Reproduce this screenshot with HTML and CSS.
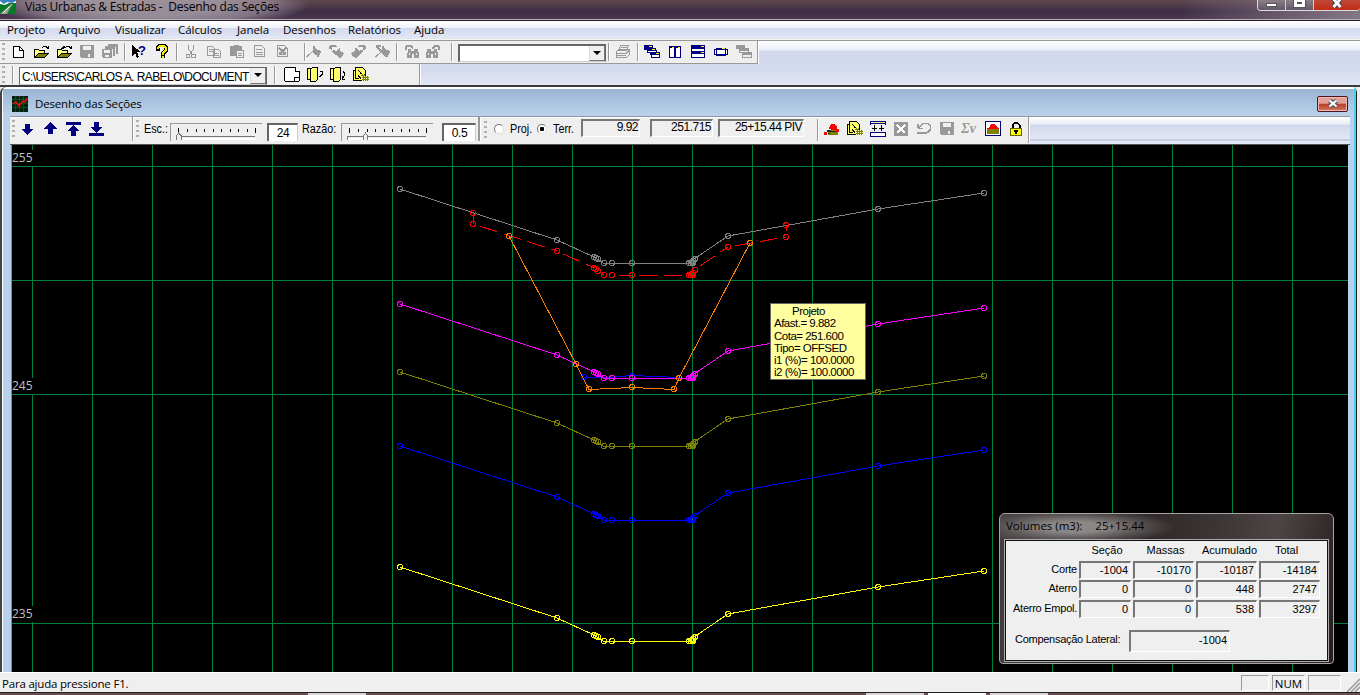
FILE: index.html
```html
<!DOCTYPE html>
<html lang="pt-BR">
<head>
<meta charset="utf-8">
<title>Vias Urbanas &amp; Estradas - Desenho das Seções</title>
<link rel="stylesheet" href="styles.css">
</head>
<body>
<div class="app">
  <header class="titlebar">
    <svg class="app-icon" width="16" height="14" viewBox="0 0 16 14"><path fill="#3b7fc4" d="M0 0h16v6H0z"/><path fill="#fff" d="M0 1l4 3 3-2 5 1 4-2v2l-5 3-6 1-5-2z"/><path fill="#0a7a28" d="M0 4l5 1 4-2 7 0v11H0z"/><path fill="#9aa09a" d="M0 14l8-7 3-3 2 0-3 4-3 6z"/><path stroke="#eee" d="M3 13l7-7"/></svg>
    <span class="titlebar-text">Vias Urbanas &amp; Estradas -&nbsp; Desenho das Seções</span>
    <div class="winbtns"><span class="wb wb-min"><i></i></span><span class="wb wb-max"><i></i></span><span class="wb wb-close"><svg width="12" height="8" viewBox="0 0 12 8"><path d="M2.500-1l7 8M9.500-1l-7 8" stroke="#445" stroke-width="5"/><path d="M2.500-1l7 8M9.500-1l-7 8" stroke="#fff" stroke-width="2.800"/></svg></span></div>
  </header>

  <nav class="menu">
    <span class="m1">Projeto</span><span class="m2">Arquivo</span><span class="m3">Visualizar</span><span class="m4">Cálculos</span><span class="m5">Janela</span><span class="m6">Desenhos</span><span class="m7">Relatórios</span><span class="m8">Ajuda</span>
  </nav>

  <div class="bars">
    <div class="bar bar-main">
      <i class="grip"></i>
      <svg class="ic first" viewBox="0 0 16 16"><path d="M3.500 2.500h6l4 4v7h-10z" fill="#fff" stroke="#000"/><path d="M9.500 2.500v4h4" fill="none" stroke="#000"/></svg>
      <svg class="ic" viewBox="0 0 16 16"><use href="#open"/></svg>
      <svg class="ic" viewBox="0 0 16 16"><use href="#open"/><path d="M4 5l3-3h2v2L6 5z"/></svg>
      <svg class="ic" viewBox="0 0 16 16"><use href="#disk"/></svg>
      <svg class="ic" viewBox="0 0 16 16"><path d="M6 0h9l1 1v9h-2V3H6zM3 2h9l1 1v9h-2V5H3z" fill="#999"/><path d="M0 5h10v9H1l-1-1z" fill="#999"/><path d="M2 6h6v3H2zM3 11h4v2H3z" fill="#efefef"/></svg>
      <i class="sep s1"></i>
      <svg class="ic" viewBox="0 0 16 16"><path d="M1 1v11l3-3 2 5 2-1-2-5h4z"/><text x="7" y="11" class="q-navy">?</text></svg>
      <svg class="ic" viewBox="0 0 16 16"><path d="M4 7V3l2-2h4l2 2v4l-3 2v2M8.500 11v3" fill="none" stroke="#000" stroke-width="4"/><path d="M4 5V4l2-2h4l2 2v2L8.500 9v2M8.500 12v2" fill="none" stroke="#f6ee00" stroke-width="2"/></svg>
      <i class="sep s2"></i>
      <svg class="ic" viewBox="0 0 16 16"><path d="M5.500 1v4l4 6M10.500 1v4l-4 6" fill="none" stroke="#999"/><circle cx="5" cy="12" r="2" fill="none" stroke="#999"/><circle cx="10.500" cy="12" r="2" fill="none" stroke="#999"/></svg>
      <svg class="ic" viewBox="0 0 16 16"><path d="M1.500 2.500h5l2 2v7h-7zM7.500 5.500h5l2 2v6h-7z" fill="#efefef" stroke="#999"/><path d="M3 5.500h4M3 7.500h4M9 9.500h4M9 11.500h4" stroke="#999"/></svg>
      <svg class="ic" viewBox="0 0 16 16"><path d="M1 2h3l1-1h4l1 1h3v10H1z" fill="#999"/><path d="M7.500 6.500h7v7h-7z" fill="#efefef" stroke="#999"/><path d="M9 9.500h4M9 11.500h4" stroke="#999"/></svg>
      <svg class="ic" viewBox="0 0 16 16"><use href="#sheet"/></svg>
      <svg class="ic" viewBox="0 0 16 16"><use href="#sheet"/><path d="M4 4l7 7M11 4l-7 7" stroke="#999" stroke-width="2"/></svg>
      <i class="sep s3"></i>
      <svg class="ic" viewBox="0 0 16 16"><use href="#spade"/></svg>
      <svg class="ic" viewBox="0 0 16 16"><use href="#spade-turn"/></svg>
      <svg class="ic" viewBox="0 0 16 16"><use href="#spade-turn" transform="matrix(-1 0 0 1 16 0)"/></svg>
      <svg class="ic" viewBox="0 0 16 16"><use href="#spade"/><path d="M2 2h5M3 3l10 10" stroke="#999" stroke-width="2"/></svg>
      <i class="sep s4"></i>
      <svg class="ic ic-21" viewBox="0 0 16 16"><use href="#binoc"/></svg>
      <svg class="ic ic-21" viewBox="0 0 16 16"><use href="#binoc" transform="matrix(-1 0 0 1 16 0)"/></svg>
      <i class="sep s5"></i>
      <div class="combo combo-find"><span></span><b></b></div>
      <i class="sep s6"></i>
      <svg class="ic" viewBox="0 0 16 16"><path d="M5.500 1.500h8l-2 5h-8z M1.500 7.500l2-2h11v5l-3 3h-10z" fill="#efefef" stroke="#999"/><path d="M2 9.500h9l3-3M2 11.500h9M6 3.500h6" stroke="#999" fill="none"/></svg>
      <i class="sep s7"></i>
      <svg class="ic" viewBox="0 0 16 16"><use href="#cascade"/></svg>
      <svg class="ic" viewBox="0 0 16 16"><path d="M2.500 2.500h5v11h-5zM8.500 2.500h5v11h-5z" fill="#fff" stroke="#000080"/><path d="M2 2h12v2H2z" fill="#000080"/><path d="M5 3h2M11 3h2" stroke="#ff0"/></svg>
      <svg class="ic" viewBox="0 0 16 16"><path d="M1.500 1.500h13v12h-13z" fill="#fff" stroke="#000080"/><path d="M1 1h14v4H1zM1 7h14v3H1z" fill="#000080"/><path d="M11 2.500h3M11 8.500h3" stroke="#ff0"/></svg>
      <svg class="ic" viewBox="0 0 16 16"><path d="M1.500 5.500h13v5h-13zM3.500 4.500h9v7h-9z" fill="#fff" stroke="#000080"/><path d="M3 4h10v2H3z" fill="#000080"/><path d="M9 4.500h3" stroke="#ff0"/></svg>
      <svg class="ic" viewBox="0 0 16 16"><use href="#cascade-off"/></svg>
    </div>
    <div class="bar bar-path">
      <i class="grip"></i><i class="sep p1"></i>
      <div class="combo combo-path"><span>C:\USERS\CARLOS A. RABELO\DOCUMENT</span><b></b></div>
      <i class="sep p2"></i>
      <svg class="ic" viewBox="0 0 16 16"><path d="M.5 1.500l1-1h10l4 4v9l-1 1H1.500l-1-1z" fill="#fff" stroke="#000"/><path d="M11.500.500v4h4M10.500 14v-4h5" fill="#fff" stroke="#000"/></svg>
      <svg class="ic" viewBox="0 0 16 16"><use href="#copybook"/><path d="M13 4.500h2.500V7L13 10" fill="none" stroke="#000" stroke-width="1.500"/></svg>
      <svg class="ic" viewBox="0 0 16 16"><use href="#copybook"/><path d="M13 4l2 3-2 4M12 9v3h3" fill="none" stroke="#000"/></svg>
      <svg class="ic" viewBox="0 0 16 16"><use href="#hatch"/></svg>
    </div>
  </div>

  <main class="child">
    <div class="child-title">
      <svg width="16" height="16" viewBox="0 0 16 16"><path d="M0 0h16v16H0z" fill="#021"/><path d="M3.500 0v16M7.500 0v16M11.500 0v16M0 3.500h16M0 7.500h16M0 11.500h16" stroke="#154a15"/><path d="M1 8l3-2 3 4 4-5 2 1 2-4" stroke="#e11" stroke-width="1.500" fill="none"/></svg>
      <span>Desenho das Seções</span>
      <b class="child-close"><svg width="12" height="9" viewBox="0 0 12 9"><path d="M2.500 1.500l7 6M9.500 1.500l-7 6" stroke="#556" stroke-width="4.500"/><path d="M2.500 1.500l7 6M9.500 1.500l-7 6" stroke="#fff" stroke-width="2.200"/></svg></b>
    </div>

    <div class="tools">
      <div class="tb tb-nav">
        <i class="grip"></i>
        <svg class="ic" viewBox="0 0 16 16"><path d="M6 3h5v5h4l-6.500 6L2 8h4z" fill="#000080"/></svg>
        <svg class="ic" viewBox="0 0 16 16"><path d="M6 13h5V8h4L8.500 1 2 8h4z" fill="#000080"/></svg>
        <svg class="ic" viewBox="0 0 16 16"><path d="M1 1h15v3H1zM6 15h5v-5h4L8.500 4 2 10h4z" fill="#000080"/></svg>
        <svg class="ic" viewBox="0 0 16 16"><path d="M1 12h15v3H1zM6 1h5v5h4l-6.500 6L2 6h4z" fill="#000080"/></svg>
      </div>
      <div class="tb tb-scale">
        <i class="grip"></i>
        <label class="l-esc">Esc.:</label>
        <svg class="slider" width="92" height="18" viewBox="0 0 92 18"><use href="#ticks"/><path d="M6.500 17v-4l2-3 3 3v4" fill="#efefef" stroke="#777"/></svg>
        <span class="num n1">24</span>
        <label class="l-raz">Razão:</label>
        <svg class="slider" width="92" height="18" viewBox="0 0 92 18"><use href="#ticks"/><path d="M22.500 17v-4l2-3 2 3v4" fill="#efefef" stroke="#777"/></svg>
        <span class="num n2">0.5</span>
      </div>
      <div class="tb tb-info">
        <i class="grip"></i>
        <i class="radio"></i><label class="l-proj">Proj.</label>
        <i class="radio on"></i><label class="l-terr">Terr.</label>
        <span class="field f1">9.92</span><span class="field f2">251.715</span><span class="field f3">25+15.44 PIV</span>
        <i class="sep t1"></i>
        <svg class="ic" viewBox="0 0 16 16"><path d="M4 14v-3l3-2h4l3 3v2z" fill="#808000"/><path d="M5 7l2-4h4l2 3v3H8L5 8z" fill="red"/><path d="M3 9h4v2H3zM7 10h5v1H7zM4 12h2v1H4z" fill="#222"/><path d="M0 11h3v3H0zM12 8h3v3h-3z" fill="red"/></svg>
        <svg class="ic" viewBox="0 0 16 16"><use href="#hatch"/></svg>
        <svg class="ic" viewBox="0 0 16 16"><path d="M.5 4V.500h15V4M1 2.500h14" fill="none" stroke="#000080"/><path d="M3 1.500h3M10 1.500h3" stroke="#ff0"/><path d="M4.500 4v6M11.500 4v6M2 7.500h5M9 7.500h5" stroke="#000"/><path d="M.5 11.500h15v4H.500z" fill="#fff" stroke="#000080"/></svg>
        <svg class="ic" viewBox="0 0 16 16"><path d="M1 1h14v14H1z" fill="#999"/><path d="M4 4l8 8M12 4l-8 8" stroke="#fff" stroke-width="2"/></svg>
        <svg class="ic" viewBox="0 0 16 16"><path d="M2 6.500V3M2 7.500h5M3 6.500l4-4h5l2.500 2v4l-3 3H2v1h9" fill="none" stroke="#999" stroke-width="1.500"/></svg>
        <svg class="ic" viewBox="0 0 16 16"><use href="#disk"/></svg>
        <svg class="ic ic-wide" viewBox="0 0 18 16"><text x="0" y="12" class="sigma">Σν</text></svg>
        <svg class="ic" viewBox="0 0 16 16"><path d="M.5.500h15v14H.500z" fill="#fff" stroke="#000080"/><path d="M2 8h12v5H2z" fill="#808000"/><path d="M2 8V7l3-1V4l2-1h3l1 2 3 2v1z" fill="red"/></svg>
        <svg class="ic" viewBox="0 0 16 16"><path d="M4.500 8V4l2-2h3l2 2v4" fill="none" stroke="#000" stroke-width="2"/><path d="M2.500 7.500h11v7h-11z" fill="#ff0" stroke="#660"/><path d="M6 9.500h4M8 9v4" stroke="#000" stroke-width="2"/></svg>
      </div>
      <div class="tb-rest"></div>
    </div>

    <div class="canvas">
      <svg class="plot" width="1336" height="527" viewBox="12 145 1336 527">
        <defs>
          <g id="open"><path d="M1.500 13.500v-8h4l1 1h5v3h-6z" fill="#ffff80" stroke="#000"/><path d="M1.500 13.500l4-4h10l-4 4z" fill="#808000" stroke="#000"/><path d="M9 3.500l2-1h2l2 2M15.500 2v3" fill="none" stroke="#000"/></g>
          <path id="disk" fill-rule="evenodd" d="M1 1h14v13H2l-1-1zM4 2v4h8V2zM9 10v3h2v-3z" fill="#999"/>
          <g id="sheet"><path d="M2.500 1.500h7l3 3v8h-10z" fill="#efefef" stroke="#999"/><path d="M4 5.500h6M4 8.500h7M4 10.500h7" stroke="#999"/></g>
          <path id="spade" d="M0 13h2l5-5 3 3h2v2h2l1-4 1-1-2-2h-2l-2-2V2H8v5z" fill="#999"/>
          <g id="spade-turn" fill="#999"><path d="M1 5V2l2-1h4l2 1v1H4v3zM3 7l3-1 3 2 4 2 3-1-2 4-3 1-3-3z"/><path d="M6 9l5-5h1v3l4 2-3 3z"/></g>
          <g id="binoc" fill="#999"><path d="M1 2l2-1h4l2 2v2H8L6 3H3v3H1zM4 5h3v2h3V5h4v2l1 2v5h-5v-4H8v4H3V9l1-1z"/><path d="M5 9h1v2H5zM12 9h1v2h-1z" fill="#efefef"/></g>
          <g id="cascade"><path d="M0 1h9v5H0z" fill="#000080"/><path d="M3.500 6.500h9v2h-9zM7.500 10.500h8v3h-8z" fill="#fff" stroke="#000080"/><path d="M3 4h9v3H3zM6 8h10v3H6z" fill="#000080"/><path d="M5 2.500h3M8 5.500h3M12 9.500h3" stroke="#ff0"/></g>
          <g id="cascade-off"><path d="M0 1h9v4H0z" fill="#999"/><path d="M3.500 6.500h9v2h-9zM6.500 10.500h9v3h-9z" fill="#efefef" stroke="#999"/><path d="M3 4h10v2H3zM6 8h10v3H6z" fill="#999"/></g>
          <g id="copybook"><path d="M.5 1.500h8v11h-8z" fill="#ffff70" stroke="#000"/><path d="M3.500 2.500l2-2h5v12l-2 2h-5z" fill="#ffff70" stroke="#000"/></g>
          <g id="hatch"><path d="M.5 3.500h2v-3h7l3 3v10H.500z" fill="#ff6" stroke="#000"/><path d="M2.500 3v8h3M5 3l7 8M5 8l3 4" stroke="#000" fill="none"/><path d="M9 9h7v5H9zM8 7h4v2H8z" fill="#808000"/><path d="M9 9.500h7M9 11.500h7M9 13.500h7M8 7.500h4" stroke="#efefaf" stroke-dasharray="1 1"/></g>
          <g id="ticks"><path d="M.5 18V.500H92" fill="none" stroke="#999"/><path d="M8.500 5v5M17.500 6v3M26 6v3M34.500 6v3M43 6v3M51.500 6v3M60 6v3M68.500 6v3M77 6v3M85.500 5v5" stroke="#000"/><path d="M6 17v-3.500h79" fill="none" stroke="#777"/><path d="M7 16h79" stroke="#fff" stroke-width="2"/></g>
          <circle id="node" r="2.500" fill="none" stroke="currentColor"/>
          <g id="terrain" fill="none" stroke="currentColor">
            <path d="M400 0L557 51 594 68 604 74.500H689L694 70 728 47 878 20 984 4"/>
            <use href="#node" x="400"/><use href="#node" x="557" y="51"/><use href="#node" x="594" y="68"/><use href="#node" x="596" y="69"/><use href="#node" x="598" y="70"/><use href="#node" x="604" y="74"/><use href="#node" x="612" y="74"/><use href="#node" x="632" y="74"/><use href="#node" x="689" y="74"/><use href="#node" x="691" y="74"/><use href="#node" x="692" y="73"/><use href="#node" x="693" y="74"/><use href="#node" x="693" y="72"/><use href="#node" x="695" y="70"/><use href="#node" x="728" y="47"/><use href="#node" x="878" y="20"/><use href="#node" x="984" y="4"/>
          </g>
        </defs>
        <path class="grid" d="M32 145h1v527h-1zM92 145h1v527h-1zM152 145h1v527h-1zM212 145h1v527h-1zM272 145h1v527h-1zM332 145h1v527h-1zM392 145h1v527h-1zM452 145h1v527h-1zM512 145h1v527h-1zM572 145h1v527h-1zM632 145h1v527h-1zM692 145h1v527h-1zM752 145h1v527h-1zM812 145h1v527h-1zM872 145h1v527h-1zM932 145h1v527h-1zM992 145h1v527h-1zM1052 145h1v527h-1zM1112 145h1v527h-1zM1172 145h1v527h-1zM1232 145h1v527h-1zM1292 145h1v527h-1z"/>
        <path class="grid" d="M12 166h1336v1H12zM12 280h1336v1H12zM12 394h1336v1H12zM12 623h1336v1H12z"/>
        <path d="M12 150h21v16H12zM12 378h21v16H12zM12 606h21v16H12z"/>
        <g class="axis"><text x="12" y="162">255</text><text x="12" y="390">245</text><text x="12" y="618">235</text></g>
        <use href="#terrain" y="189" color="#808080"/>
        <g color="#f00" fill="none" stroke="#f00">
          <path d="M473.500 213v11M786.500 225v6"/>
          <path stroke-dasharray="18 7" stroke-dashoffset="18" d="M473 224L557 251M557 251L594 268M594 268L604 275.500M612 275.500H632M632 275.500H689M694 270L728 247M728 247L786 237"/>
          <use href="#node" x="473" y="213"/><use href="#node" x="473" y="224"/><use href="#node" x="557" y="251"/><use href="#node" x="594" y="268"/><use href="#node" x="596" y="269"/><use href="#node" x="598" y="271"/><use href="#node" x="604" y="275"/><use href="#node" x="612" y="275"/><use href="#node" x="632" y="275"/><use href="#node" x="689" y="275"/><use href="#node" x="691" y="275"/><use href="#node" x="692" y="274"/><use href="#node" x="693" y="275"/><use href="#node" x="693" y="273"/><use href="#node" x="695" y="270"/><use href="#node" x="728" y="247"/><use href="#node" x="786" y="225"/><use href="#node" x="786" y="237"/>
        </g>
        <g color="#00f" fill="none" stroke="#00f"><path d="M584 377.500h24L632 375.500 656 376.500 679 377.500"/><use href="#node" x="584" y="377"/><use href="#node" x="632" y="376"/></g>
        <use href="#terrain" y="304" color="#f0f"/>
        <g color="#ff8000" fill="none" stroke="#ff8000">
          <path d="M509 236L576 364 589 389.500 632 387.500 674 389.500 679 378 750 243"/>
          <use href="#node" x="509" y="236"/><use href="#node" x="576" y="364"/><use href="#node" x="589" y="389"/><use href="#node" x="632" y="387"/><use href="#node" x="674" y="389"/><use href="#node" x="679" y="378"/><use href="#node" x="750" y="243"/>
        </g>
        <use href="#terrain" y="372" color="#808000"/>
        <use href="#terrain" y="446" color="#00f"/>
        <use href="#terrain" y="567" color="#ff0"/>
      </svg>

      <div class="tip"><span class="tip-head">Projeto</span><span>Afast.= 9.882</span><span>Cota= 251.600</span><span>Tipo= OFFSED</span><span>i1 (%)= 100.0000</span><span>i2 (%)= 100.0000</span></div>

      <section class="volumes">
        <h2><span>Volumes (m3):</span><span>25+15.44</span></h2>
        <div class="volumes-body">
          <div class="vgrid">
            <i></i><em class="sec">Seção</em><em class="mas">Massas</em><em class="acc">Acumulado</em><em class="tot">Total</em>
            <label>Corte</label><b>-1004</b><b>-10170</b><b>-10187</b><b>-14184</b>
            <label>Aterro</label><b>0</b><b>0</b><b>448</b><b>2747</b>
            <label>Aterro Empol.</label><b>0</b><b>0</b><b>538</b><b>3297</b>
          </div>
          <div class="lateral"><label>Compensação Lateral:</label><b>-1004</b></div>
        </div>
      </section>
    </div>
  </main>

  <footer class="status">
    <span class="status-text">Para ajuda pressione F1.</span>
    <i class="pane pa"></i><i class="pane pb">NUM</i><i class="pane pc"></i>
    <svg width="14" height="14" viewBox="0 0 14 14"><path d="M1 14L14 1M5 14l9-9M9 14l5-5" stroke="#999" stroke-width="1.500"/></svg>
  </footer>
  <div class="desk"><i class="d1"></i><i class="d2"></i><i class="d3"></i><i class="d4"></i></div>
</div>
</body>
</html>
```
FILE: styles.css
```css
* { box-sizing: border-box; }
body { margin: 0; overflow: hidden; background: #efefef; font: 11px/13px "Liberation Sans", Arial, sans-serif; color: #000; }
.app { width: 1360px; height: 695px; display: flex; flex-direction: column; overflow: hidden; }
i, em { font-style: normal; }
b { font-weight: normal; }
svg { display: block; flex: none; }
span, label { white-space: nowrap; }

/* Main window frame */
.titlebar { height: 21px; flex: none; display: flex; align-items: flex-start; border-bottom: 1px solid #241c24; box-shadow: inset 0 -1px #b8b0b8;
  background: radial-gradient(ellipse 160px 24px at 150px 5px, #aaa1aad0 45%, #9d909cb0 75%, transparent), linear-gradient(90deg, transparent 1180px, #857886), linear-gradient(#60484f, #3e2e45 55%, #4a3850); }
.app-icon { height: 14px; }
.titlebar-text { margin: 0 0 0 9px; font: 12px/14px "Open Sans", sans-serif; letter-spacing: -.22px; }
.winbtns { margin-left: auto; margin-right: 0; display: flex; height: 11px; border: 1px solid #ddd; border-top: 0; border-right: 0; border-radius: 0 0 4px 4px; overflow: hidden; }
.wb { display: flex; justify-content: center; border-right: 1px solid #ccc; width: 28px; background: linear-gradient(#8b8088, #62566a); }
.wb-close { width: 46px; border: 0; background: linear-gradient(#bf4938, #c22c14); }
.wb-min i { width: 11px; height: 4px; margin-top: 3px; background: #fff; border: 1px solid #555; }
.wb-max i { width: 11px; height: 7px; border: 3px solid #fff; border-top-width: 2px; background: #555; outline: 1px solid #555; }

.menu { height: 20px; flex: none; display: flex; background: linear-gradient(#fff 0, #eef1f9 35%, #d3d9ec 36%, #e1e6f5 88%, #aeb3c4 89%, #f4f4f4 93%); border-bottom: 1px solid #9a9a9a; font: 11.5px/18px "Open Sans", sans-serif; }
.menu span { flex: none; letter-spacing: -.05px; }
.m1 { width: 52px; margin-left: 7px; }
.m2 { width: 56px; }
.m3 { width: 63px; }
.m4 { width: 59px; }
.m5 { width: 46px; }
.m6 { width: 65px; }
.m7 { width: 66px; }
.menu .m1, .menu .m7 { letter-spacing: -.1px; }

/* Tool bars */
.bars { height: 46px; flex: none; background: linear-gradient(#fff, #e9edf8 9px, #d2d8ec 10px, #d5dbee 30px, #e2e7f6); border-bottom: 2px solid #3b3b3f; }
.bar { display: flex; align-items: center; background: #efefef; border-right: 1px solid #999; border-bottom: 1px solid #999; box-shadow: 1px 0 #fff; }
.bar-main { width: 758px; height: 23px; }
.bar-path { width: 420px; height: 21px; border-bottom: 0; }
.ic { width: 16px; height: 16px; margin: 0 3px 0 4px; shape-rendering: crispEdges; }
.bar-main .ic:not(.ic-21) { margin: 0 4px 0 3px; }
.ic.ic-21 { margin: 0 2px 0 3px; }
.ic.ic-wide { width: 18px; margin: 0 2px 0 3px; }
.grip { flex: none; width: 3px; height: 18px; margin: 0 0 0 2px; background: repeating-linear-gradient(#b0b0b0 0 2px, transparent 2px 5px); }
.bar-main .grip { margin-right: 2px; }
.sep { flex: none; width: 1px; height: 18px; background: #999; box-shadow: 1px 0 #fff; }
.s1 { margin: 0 3px 0 2px; }
.s2 { margin: 0 3px 0 2px; }
.s3 { margin: 0 -3px 0 9px; }
.s4 { margin: 0 4px 0 2px; }
.s5 { margin: 0 6px 0 8px; }
.s6 { margin: 0 3px 0 2px; }
.s7 { margin: 0 3px 0 2px; }
.q-navy { font: bold 13px "Liberation Sans", sans-serif; fill: #000080; }
.sigma { font: italic bold 14px "Liberation Serif", serif; fill: #999; }
.combo { flex: none; display: flex; background: #fff; border: 1px solid #666; border-bottom-color: #ccc; overflow: hidden; }
.combo span { flex: 1; }
.combo b { flex: none; width: 16px; display: flex; align-items: center; justify-content: center; background: #efefef; border-left: 1px solid #ddd; border-right: 1px solid #777; border-bottom: 1px solid #777; }
.combo b::before { content: ""; border: 4px solid transparent; border-top-color: #000; border-bottom: 0; }
.combo-find { width: 148px; height: 18px; margin-top: 2px; border-top-width: 2px; border-left-width: 2px; }
.combo-path { width: 248px; height: 18px; padding-left: 2px; margin-top: 2px; font-size: 12px; line-height: 18px; }
.combo-path span { letter-spacing: -.63px; }
.p1 { margin: 0 6px 0 7px; }
.p2 { margin: 0 5px 0 7px; }

/* Section drawing window */
.child { flex: 1; min-height: 0; display: flex; flex-direction: column; padding: 0 9px 0 10px; border-left: 2px solid #444; border-right: 2px solid #eee; margin: 0 1px 0 0;
  background: linear-gradient(#222, #222) right / 1px 100% no-repeat, linear-gradient(#45d2f4, #45d2f4) right 1px top / 2px 100% no-repeat, linear-gradient(#fff, #fff) left / 1px 100% no-repeat, linear-gradient(#fff, #fff) top / 100% 2px no-repeat, linear-gradient(#98b4d2, #b9d1ea 28px, #b9d1ea); border-radius: 6px 6px 0 0; }
.child-title { height: 29px; flex: none; display: flex; align-items: center; padding: 4px 0 0; }
.child-title span { margin-left: 7px; font: 11.5px/16px "Open Sans", sans-serif; letter-spacing: -.18px; }
.child-close { margin-left: auto; margin-right: 0; width: 31px; height: 16px; display: flex; align-items: center; justify-content: center; border: 1px solid #4a1420; border-radius: 2px; box-shadow: inset 0 0 0 1px #f0b8b0; background: linear-gradient(#e2a197 45%, #bc3b27 50%, #d07a62); }
.tools { height: 29px; flex: none; display: flex; margin: 0 -2px 0 -2px; background: #efefef; border-top: 1px solid #8d98a6; border-bottom: 1px solid #555; }
.tb { display: flex; align-items: center; flex: none; border-right: 1px solid #999; box-shadow: 1px 0 #fff, inset 0 1px #fff; height: 24px; }
.tb label { flex: none; font-size: 12px; line-height: 15px; transform: scaleX(.9); transform-origin: left; }
.tb-nav { width: 123px; }
.tb-nav .grip { margin-right: 1px; }
.tb-nav .ic { margin: 0 4px 0 3px; }
.tb-scale { width: 347px; padding-left: 1px; border-right-width: 2px; }
.l-esc { width: 27px; margin-left: 5px; }
.l-raz { width: 40px; margin-left: 4px; }
.slider { margin-top: 5px; margin-left: -1px; shape-rendering: crispEdges; }
.num { flex: none; height: 18px; background: #fff; border: 2px solid #666; border-right: 1px solid #ccc; border-bottom: 0; margin-top: 5px; font-size: 12px; line-height: 16px; letter-spacing: -.4px; text-align: center; }
.n1 { width: 31px; margin-left: 5px; }
.n2 { width: 34px; margin-left: 9px; }
.tb-info { width: 549px; height: 26px; padding-left: 2px; }
.radio { flex: none; width: 10px; height: 10px; margin-left: 7px; margin-top: -3px; border: 1px solid #777; border-right-color: #ddd; border-bottom-color: #ddd; border-radius: 50%; background: #fff; }
.radio.on { margin-left: 0; background: radial-gradient(circle, #000 2px, #fff 2.500px); }
.l-proj { width: 27px; margin: -2px 0 0 6px; }
.l-terr { width: 28px; margin: -2px 0 0 6px; }
.field { flex: none; height: 18px; border: 1px solid #fff; border-top: 2px solid #777; border-left: 2px solid #777; margin-top: -4px; padding-right: 1px; text-align: right; font-size: 12px; line-height: 13px; letter-spacing: -.5px; }
.f1 { width: 59px; }
.f2 { width: 63px; margin-left: 10px; }
.f3 { width: 86px; margin-left: 5px; }
.t1 { height: 22px; margin-left: 13px; margin-right: 2px; }
.tb-info .ic { position: relative; top: -1px; }
.tb-info .ic:not(.ic-wide) { margin: 0 3px 0 4px; }
.tb-rest { flex: 1; margin-left: 1px; background: linear-gradient(#fff, #eaeef9 7px, #d2d8ec 8px, #e2e7f6 22px, #aeb3c4 23px, #e2e7f6 24px); }

.canvas { position: relative; flex: none; width: 1337px; height: 527px; margin-left: -1px; background: #000; border-left: 1px solid #888; }
.plot { shape-rendering: crispEdges; }
.grid { fill: #008040; }
.axis { font: 12px "Open Sans", sans-serif; fill: #c0c0c0; }
.tip { position: absolute; left: 758px; top: 158px; width: 96px; height: 77px; display: flex; flex-direction: column; padding: 1px 3px; background: #ffffa0; border: 1px solid #666; font-size: 11.5px; line-height: 12.3px; letter-spacing: -.5px; }
.tip-head { padding-left: 18px; }

/* Floating volumes panel */
.volumes { position: absolute; left: 987px; top: 368px; width: 335px; height: 151px; padding: 0 5px 3px 5px; border: 1px solid #a8a4a4; border-radius: 6px 6px 4px 4px; background: radial-gradient(ellipse 100px 18px at 75px 13px, #8b8787 30%, #6a656580 75%, transparent), linear-gradient(100deg, #45403f, #2c2424 35%, #3b3434 60%, #4d4545 78%, #251c1c); }
.volumes h2 { margin: 0; height: 26px; display: flex; gap: 13px; padding-left: 1px; font: 11.5px/24px "Open Sans", sans-serif; }
.volumes-body { height: 121px; background: #efefef; border: 1px solid #111; box-shadow: 0 0 0 1px #aaa; padding: 2px 0 0; }
.vgrid { display: grid; grid-template-columns: 71px 52px 61px 61px 61px; grid-template-rows: 16px 18px 18px 18px; gap: 1.500px 2px; }
.vgrid em { text-align: center; line-height: 14px; letter-spacing: 0; }
.sec { padding-left: 4px; }
.acc { padding-left: 6px; }
.mas { padding-left: 4px; }
.tot { padding-right: 6px; }
.vgrid label { text-align: right; line-height: 16px; letter-spacing: -.25px; }
.volumes b { border: 1px solid #fff; border-top: 2px solid #777; border-left: 2px solid #777; text-align: right; padding-right: 2px; line-height: 15px; }
.lateral { display: flex; margin-top: 12px; padding-left: 9px; }
.lateral label { width: 114px; line-height: 19px; letter-spacing: -.27px; }
.lateral b { width: 101px; height: 22px; line-height: 17px; }

/* Status line */
.status { height: 20px; flex: none; display: flex; align-items: center; background: #efefef; border-top: 1px solid #fff; font: 11.5px/17px "Open Sans", sans-serif; }
.status-text { margin: 2px auto 0 2px; letter-spacing: -.2px; }
.pane { height: 16px; border: 1px solid #999; border-right-color: #fff; border-bottom-color: #fff; text-align: center; line-height: 16px; margin-right: 3px; }
.pa { width: 28px; }
.pb { width: 33px; }
.pc { width: 33px; }
.status svg { margin-left: 2px; margin-top: 4px; }
.desk { height: 3px; flex: none; background: #694d50; border-top: 1px solid #222; display: flex; }
.desk i { width: 58px; background: #ddd5d5; }
.desk .d1 { margin-left: 308px; }
.desk .d2 { margin-left: 500px; }
.desk .d3 { margin-left: 4px; background: #fff; }
.desk .d4 { margin-left: 4px; }
```
